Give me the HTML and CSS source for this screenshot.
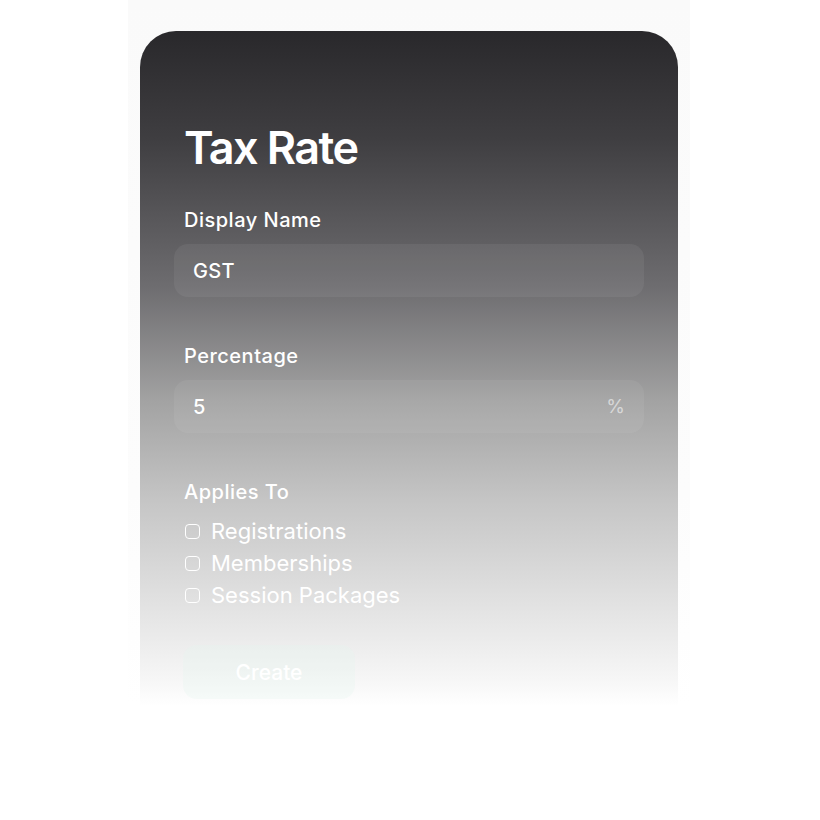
FILE: index.html
```html
<!DOCTYPE html>
<html lang="en">
<head>
<meta charset="utf-8">
<title>Tax Rate</title>
<link rel="stylesheet" href="styles.css">
</head>
<body>
<div class="stage">
  <div class="halo">
    <form class="card">
      <h1 class="title">Tax Rate</h1>

      <div class="field">
        <label class="label">Display Name</label>
        <div class="input"><span class="value">GST</span></div>
      </div>

      <div class="field">
        <label class="label">Percentage</label>
        <div class="input"><span class="value">5</span><span class="suffix">%</span></div>
      </div>

      <div class="field applies">
        <div class="label">Applies To</div>
        <ul class="checks">
          <li class="check"><span class="box"></span>Registrations</li>
          <li class="check"><span class="box"></span>Memberships</li>
          <li class="check"><span class="box"></span>Session Packages</li>
        </ul>
      </div>

      <div class="actions">
        <button type="button" class="btn">Create</button>
      </div>
    </form>
  </div>
</div>
</body>
</html>
```

FILE: styles.css
```css
* { box-sizing: border-box; }
html, body { margin: 0; padding: 0; background: #ffffff; }
body {
  font-family: "Inter", "Noto Sans", "Liberation Sans", sans-serif;
  color: #ffffff;
  width: 820px;
  height: 820px;
  overflow: hidden;
}
.stage {
  display: flex;
  justify-content: flex-start;
  padding-left: 128px;
}
.halo {
  width: 562px;
  padding: 31px 12px 0 12px;
  background: linear-gradient(to bottom, #fafafa 0%, #fcfcfc 70%, #ffffff 100%);
}
.card {
  margin: 0;
  height: 675px;
  border-radius: 36px 36px 0 0;
  background: linear-gradient(to bottom, #29282b 0%, #3f3e41 16%, #6e6d70 38%, #a3a3a3 55%, #c6c6c6 70%, #e2e2e2 85%, #f6f6f6 96%, #ffffff 100%);
  padding: 90px 34px 0 34px;
  display: flex;
  flex-direction: column;
}
.title {
  margin: 0 0 33px 10px;
  font-size: 45px;
  font-weight: 600;
  letter-spacing: -1.6px;
  line-height: 54px;
}
.field { display: flex; flex-direction: column; }
.label {
  margin: 0 0 12px 10px;
  font-size: 20px;
  font-weight: 500;
  line-height: 24px;
  letter-spacing: 0.5px;
}
.input {
  height: 53px;
  border-radius: 14px;
  background: rgba(255, 255, 255, 0.06);
  display: flex;
  align-items: center;
  justify-content: space-between;
  padding: 0 19px;
  font-size: 20px;
  margin-bottom: 47px;
}
.value { font-weight: 500; letter-spacing: 0.3px; }
.suffix { color: rgba(255,255,255,0.55); font-size: 19px; }
.applies .label { margin-bottom: 11px; }
.checks { list-style: none; margin: 0; padding: 0 0 0 11px; }
.check {
  display: flex;
  align-items: center;
  gap: 11px;
  height: 32px;
  font-size: 22px;
  letter-spacing: 0;
}
.box {
  width: 15px;
  height: 15px;
  border: 1.6px solid #ffffff;
  border-radius: 4px;
}
.actions { padding: 34px 0 0 9px; }
.btn {
  width: 172px;
  height: 54px;
  border: none;
  border-radius: 14px;
  background: rgba(228, 246, 238, 0.3);
  color: #ffffff;
  font-family: inherit;
  font-size: 21px;
  font-weight: 500;
}
```
